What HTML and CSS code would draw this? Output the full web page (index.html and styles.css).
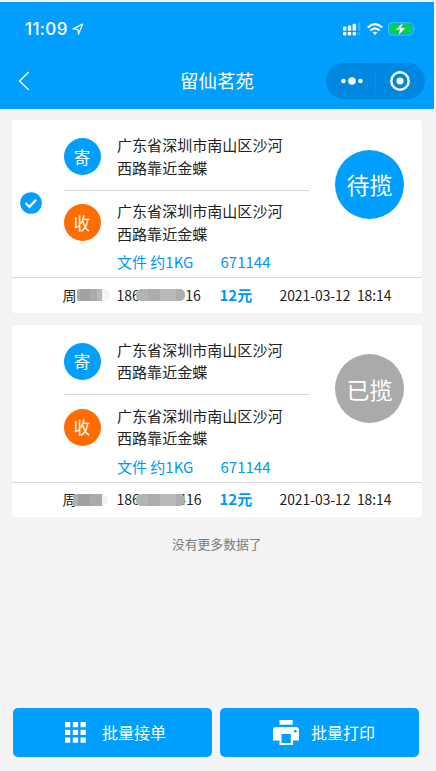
FILE: index.html
```html
<!DOCTYPE html>
<html lang="zh-CN">
<head>
<meta charset="utf-8">
<title>留仙茗苑</title>
<link rel="stylesheet" href="styles.css">
</head>
<body>
<div class="app">
  <header class="header">
    <div class="statusbar">
      <span class="clock">11:09</span>
      <svg class="location" viewBox="0 0 12 12"><path d="M1 5.8 10.7 1.2 6.5 11 5.8 6.3Z" fill="none" stroke="#fff" stroke-width="1.3" stroke-linejoin="round"/></svg>
      <svg class="signal" viewBox="0 0 18 14"><g fill="#fff"><rect x="0" y="4.5" width="3.4" height="4.2" rx="1"/><rect x="4.8" y="3.4" width="3.4" height="5.3" rx="1"/><rect x="9.6" y="1.8" width="3.4" height="6.9" rx="1"/><rect x="0" y="10" width="3.4" height="3.4" rx=".8"/><rect x="4.8" y="10" width="3.4" height="3.4" rx=".8"/><rect x="9.6" y="10" width="3.4" height="3.4" rx=".8"/></g><g fill="#27b7ff"><rect x="14.6" y=".2" width="2.8" height="8.5" rx="1"/><rect x="14.6" y="10" width="2.8" height="3" rx=".8"/></g></svg>
      <svg class="wifi" viewBox="0 0 16 12"><g fill="none" stroke="#fff" stroke-width="2.2"><path d="M.8 4.5Q8-2.2 15.2 4.5"/><path d="M3.4 7.5Q8 3.2 12.6 7.5"/></g><path d="M5.7 9.6Q8 7.8 10.3 9.6L8 12Z" fill="#fff"/></svg>
      <svg class="battery" viewBox="0 0 28 14"><rect x=".6" y=".8" width="24.6" height="12.2" rx="3.4" fill="none" stroke="#4fbcff"/><rect x="2.1" y="2.2" width="21.6" height="9.4" rx="2" fill="#00d44b"/><path d="M26.4 5.2q1.2 1.8 0 3.6Z" fill="#7dcdff"/><path d="M15 .5 7.6 7.8h4.2L10.2 13.3 17.8 6h-4.5Z" fill="#fff" stroke="#00b75d" stroke-width=".3"/></svg>
    </div>
    <div class="navbar">
      <svg class="back" viewBox="0 0 12 20"><path d="M10.8 1 1.6 10l9.2 9" fill="none" stroke="#fff" stroke-width="1.3"/></svg>
      <h1 class="title">留仙茗苑</h1>
      <div class="capsule">
        <svg class="more" viewBox="0 0 22 8"><g fill="#fff"><circle cx="2.4" cy="4" r="2.3"/><circle cx="11" cy="4" r="3.8"/><circle cx="19.4" cy="4" r="2.3"/></g></svg>
        <span class="capsule-line"></span>
        <svg class="target" viewBox="0 0 20 20"><circle cx="10" cy="10" r="8.7" fill="none" stroke="#fff" stroke-width="2.4"/><circle cx="10" cy="10" r="3.6" fill="#fff"/></svg>
      </div>
    </div>
  </header>

  <main class="list">
    <article class="card">
      <div class="card-body">
        <div class="select"><svg class="check" viewBox="0 0 22 22"><circle cx="11" cy="11" r="10.8" fill="#009fff"/><path d="m5.6 11 3.8 3.8 6.8-7" fill="none" stroke="#fff" stroke-width="2.3"/></svg></div>
        <div class="route">
          <div class="stop stop-from"><span class="badge">寄</span><p class="address">广东省深圳市南山区沙河<br>西路靠近金蝶</p></div>
          <div class="stop stop-to"><span class="badge badge-to">收</span><p class="address">广东省深圳市南山区沙河<br>西路靠近金蝶</p></div>
          <div class="parcel"><span class="kind">文件 约1KG</span><span>671144</span></div>
        </div>
        <div class="state"><span class="state-disc">待揽</span></div>
      </div>
      <footer class="card-foot">
        <span class="person">周<i class="mask mask-name"></i></span>
        <span class="phone">186<i class="mask mask-phone"></i>16</span>
        <strong class="price">12元</strong>
        <time class="time"><span>2021-03-12</span><span>18:14</span></time>
      </footer>
    </article>

    <article class="card">
      <div class="card-body">
        <div class="select"></div>
        <div class="route">
          <div class="stop stop-from"><span class="badge">寄</span><p class="address">广东省深圳市南山区沙河<br>西路靠近金蝶</p></div>
          <div class="stop stop-to"><span class="badge badge-to">收</span><p class="address">广东省深圳市南山区沙河<br>西路靠近金蝶</p></div>
          <div class="parcel"><span class="kind">文件 约1KG</span><span>671144</span></div>
        </div>
        <div class="state"><span class="state-disc state-done">已揽</span></div>
      </div>
      <footer class="card-foot">
        <span class="person">周<i class="mask mask-name mask-wide"></i></span>
        <span class="phone">186<i class="mask mask-phone mask-short"></i>416</span>
        <strong class="price">12元</strong>
        <time class="time"><span>2021-03-12</span><span>18:14</span></time>
      </footer>
    </article>
    <p class="end">没有更多数据了</p>
  </main>

  <nav class="actions">
    <button class="action action-accept"><svg class="grid-icon" viewBox="0 0 21 21"><path fill="#fff" d="M0 0h5.3v5.3H0zM7.8 0h5.3v5.3H7.8zM15.5 0h5.3v5.3h-5.3zM0 7.8h5.3v5.3H0zM7.8 7.8h5.3v5.3H7.8zM15.5 7.8h5.3v5.3h-5.3zM0 15.5h5.3v5.3H0zM7.8 15.5h5.3v5.3H7.8zM15.5 15.5h5.3v5.3h-5.3z"/></svg><span>批量接单</span></button>
    <button class="action action-print"><svg class="print-icon" viewBox="0 0 26 25"><path fill="#fff" d="M6.5 0h13.2v4.7H6.5z"/><path fill="#fff" fill-rule="evenodd" d="M3 7h20q3 0 3 3v10.5h-6V25H6.5v-4.5H0V10q0-3 3-3Zm5.5 7v9h9.3v-9Zm13.8-4.2a1.4 1.4 0 1 0 .01 0Z"/></svg><span>批量打印</span></button>
  </nav>
</div>
</body>
</html>
```
FILE: styles.css
```css
* { box-sizing: border-box; }
body {
  margin: 0;
  background: #f3f3f3;
  color: #222;
  font-family: "Noto Sans CJK SC", sans-serif;
  font-size: 15px;
}
h1, p { margin: 0; font-weight: 400; }
svg { display: block; flex: none; }
.app {
  display: flex;
  flex-direction: column;
  width: 434px;
  height: 771px;
  padding-top: 2px;
}
.header {
  height: 108px;
  flex: none;
  background: #009fff;
  border-bottom: 1px solid #fff;
  color: #fff;
}
.statusbar {
  display: flex;
  align-items: center;
  height: 53px;
  padding: 0 18px 0 25px;
}
.clock { width: 43px; font: 500 17px/20px Inter, sans-serif; letter-spacing: .35px; }
.location { width: 12px; height: 12px; margin-left: 4px; }
.signal { width: 18px; height: 14px; margin-left: auto; }
.wifi { width: 16px; height: 12px; margin-left: 6px; }
.battery { width: 28px; height: 14px; margin-left: 5px; }
.navbar {
  display: grid;
  grid-template-columns: 108px 1fr 108px;
  align-items: center;
  height: 52px;
}
.back { width: 12px; height: 20px; margin-left: 18px; }
.title { padding-bottom: 3px; text-align: center; font-size: 18.5px; line-height: 28px; }
.capsule {
  display: flex;
  align-items: center;
  width: 99px;
  height: 36px;
  padding: 0 15px;
  border-radius: 18px;
  background: #0087df;
}
.more { width: 22px; height: 8px; }
.capsule-line { width: 1px; height: 22px; margin: 0 14px 0 12px; background: #0095e8; }
.target { width: 20px; height: 20px; }
.list { flex: 1; padding: 10px 12px 0 11.5px; }
.card { height: 192.5px; margin-bottom: 12px; border-radius: 3px; background: #fff; overflow: hidden; }
.card-body { display: flex; height: 157px; }
.select { width: 52px; padding: 72px 0 0 8.5px; }
.check { width: 22px; height: 22px; }
.route { width: 245px; }
.stop { display: flex; align-items: center; }
.stop-from { height: 70.5px; padding-top: 4px; border-bottom: 1px solid #d8d8d8; }
.stop-to { height: 64.5px; }
.badge {
  display: grid;
  place-items: center;
  width: 37px;
  height: 37px;
  margin-right: 16.5px;
  border-radius: 50%;
  background: #009fff;
  color: #fff;
  font-size: 16.5px;
  line-height: 24px;
}
.badge-to { background: #ff6d00; }
.address { font-size: 15.05px; line-height: 22.5px; white-space: nowrap; }
.parcel { display: flex; height: 15px; padding-left: 53.5px; color: #0098f7; line-height: 14px; white-space: nowrap; }
.kind { width: 103.5px; }
.state { padding: 29.5px 0 0 26.5px; }
.state-disc {
  display: grid;
  place-items: center;
  width: 69px;
  height: 69px;
  border-radius: 50%;
  background: #009fff;
  color: #fff;
  font-size: 23px;
  line-height: 34px;
}
.state-done { background: #aaa; }
.card-foot {
  display: flex;
  align-items: center;
  height: 35.5px;
  padding: 0 0 1px 51px;
  border-top: 1px solid #dadada;
  font-size: 14px;
  line-height: 20px;
  white-space: nowrap;
}
.person { display: flex; align-items: center; width: 54px; }
.phone { display: flex; align-items: center; width: 103px; }
.mask { display: block; flex: none; height: 12px; margin-top: 1px; z-index: 1; }
.mask-name {
  width: 33px;
  border-radius: 3px 7px 7px 3px;
  background: linear-gradient(90deg, #aaa 0 3px, #a0a0a0 3px 13px, #aaa 13px 20px, #b8b8b8 20px 25px, #f2f2f2 25px);
}
.mask-wide {
  width: 35px;
  margin-left: -4px;
  background: linear-gradient(90deg, #b0b0b0 0 5px, #a0a0a0 5px 17px, #aaa 17px 29px, #f2f2f2 29px);
}
.mask-phone {
  width: 49px;
  margin-left: -3.5px;
  border-radius: 5px;
  background: linear-gradient(90deg, #b4b4b4 0 12px, #acacac 12px 24px, #b9b9b9 24px 40px, #afafaf 40px);
}
.mask-short { margin-right: -7px; }
.price { width: 60px; color: #0098f7; font-size: 15px; font-weight: 700; }
.time { display: flex; gap: 6.5px; font-size: 13.9px; letter-spacing: -.04px; }
.end { text-align: center; color: #7b7b7b; font-size: 12.8px; line-height: 20px; margin-top: 16.5px; }
.actions { display: grid; grid-template-columns: 199px 199px; gap: 8px; padding: 0 0 14.5px 13px; }
.action {
  display: flex;
  align-items: center;
  height: 49px;
  padding: 0;
  border: 0;
  border-radius: 5px;
  background: #009fff;
  color: #fff;
  font: 400 16px/24px "Noto Sans CJK SC", sans-serif;
}
.action-accept { padding-left: 52px; gap: 16px; }
.action-print { padding-left: 53px; gap: 12px; }
.grid-icon { width: 21px; height: 21px; }
.print-icon { width: 26px; height: 25px; }
```
